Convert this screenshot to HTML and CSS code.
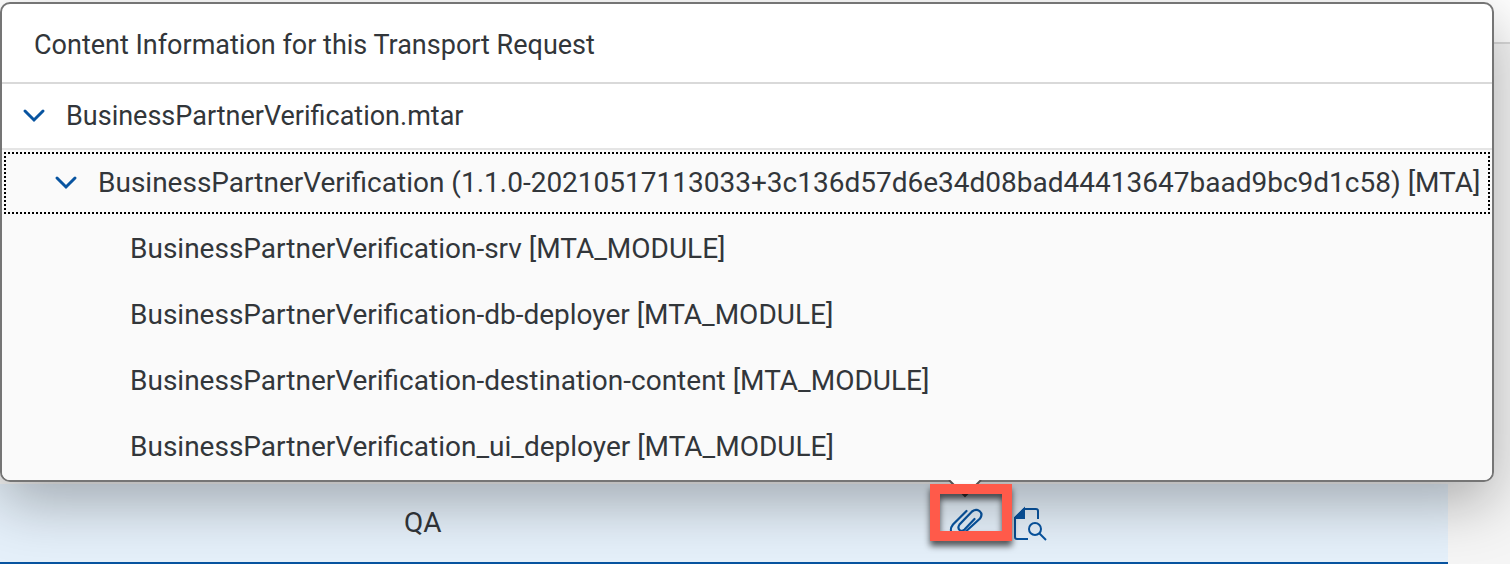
FILE: index.html
```html
<!DOCTYPE html>
<html lang="en">
<head>
<meta charset="utf-8">
<title>Transport Request Content</title>
<link rel="stylesheet" href="styles.css">
</head>
<body>
<div class="page">
  <header class="page-header"></header>
  <main class="page-body">
    <div class="queue-row">
      <span class="node-name">QA</span>
      <div class="row-actions">
        <button class="icon-button" type="button" aria-label="Show content">
          <svg width="36" height="36" viewBox="0 0 36 36" fill="none" stroke="#0854a0" stroke-width="2.200" stroke-linecap="round">
            <path d="M18.500 6 5 19.500C-1 27 7 35 14 30L32 13.500C36 8 30 2 24 6.500L11.500 19.500C8.500 24 13 28 16.500 24.500L26.500 14"/>
          </svg>
        </button>
        <button class="icon-button" type="button" aria-label="Show logs">
          <svg width="36" height="36" viewBox="0 0 36 36" fill="none" stroke="#0854a0" stroke-width="2">
            <path d="M14 34H3Q1 34 1 32V13L10 4H22Q24 4 24 6V14"/>
            <path d="M1 13 10 4V13Z" fill="#0854a0"/>
            <circle cx="21" cy="24" r="6"/>
            <path d="M25.500 28.500 32 35"/>
          </svg>
        </button>
      </div>
    </div>
  </main>
</div>
<section class="popover" role="dialog" aria-labelledby="popover-title">
  <h1 class="popover-title" id="popover-title">Content Information for this Transport Request</h1>
  <ul class="tree" role="tree">
    <li class="tree-item level-1" role="treeitem" aria-expanded="true">
      <button class="toggle" type="button" aria-label="Collapse"><svg width="24" height="16" viewBox="0 0 24 16"><path d="M3 3 12 12 21 3" fill="none" stroke="#0854a0" stroke-width="3" stroke-linecap="round"/></svg></button>
      <span>BusinessPartnerVerification.mtar</span>
    </li>
    <li class="tree-item level-2 focused" role="treeitem" aria-expanded="true">
      <button class="toggle" type="button" aria-label="Collapse"><svg width="24" height="16" viewBox="0 0 24 16"><path d="M3 3 12 12 21 3" fill="none" stroke="#0854a0" stroke-width="3" stroke-linecap="round"/></svg></button>
      <span>BusinessPartnerVerification (1.1.0-20210517113033+3c136d57d6e34d08bad44413647baad9bc9d1c58) [MTA]</span>
    </li>
    <li class="tree-item level-3" role="treeitem">BusinessPartnerVerification-srv [MTA_MODULE]</li>
    <li class="tree-item level-3" role="treeitem">BusinessPartnerVerification-db-deployer [MTA_MODULE]</li>
    <li class="tree-item level-3" role="treeitem">BusinessPartnerVerification-destination-content [MTA_MODULE]</li>
    <li class="tree-item level-3" role="treeitem">BusinessPartnerVerification_ui_deployer [MTA_MODULE]</li>
  </ul>
  <svg class="popover-arrow" width="36" height="18" viewBox="0 0 36 18"><path d="M2 0 18 16 34 0" fill="#fff" stroke="#555" stroke-width="2"/><path d="M14 13 18 17 22 13Z" fill="#444"/></svg>
</section>
<div class="highlight"></div>
</body>
</html>
```
FILE: styles.css
```css
* { box-sizing: border-box; }
body {
  margin: 0;
  background: #f5f5f5;
  color: #32363a;
  font-family: Roboto, sans-serif;
  font-size: 28px;
  line-height: 36px;
}
button {
  margin: 0;
  padding: 0;
  border: 0;
  background: none;
  cursor: pointer;
}
svg { display: block; }
.page {
  display: flex;
  flex-direction: column;
  height: 100vh;
  overflow: hidden;
}
.page-header {
  flex: 0 0 44px;
  background: #fff;
  border-bottom: 2px solid #d9d9d9;
}
.page-body {
  flex: 1;
  display: flex;
  flex-direction: column;
  justify-content: flex-end;
  padding-right: 62px;
}
.queue-row {
  display: flex;
  align-items: center;
  height: 80px;
  padding-left: 404px;
  background: #e5f0fa;
  border-bottom: 2px solid #0854a0;
}
.node-name { flex: 0 0 544px; }
.row-actions { display: flex; gap: 30px; }
.icon-button { width: 36px; height: 36px; }
.popover {
  position: absolute;
  top: 2px;
  left: 0;
  right: 16px;
  background: #fff;
  border: 2px solid #757575;
  border-radius: 10px;
  box-shadow: 0 20px 60px rgba(0, 0, 0, .3);
}
.popover-title {
  margin: 0;
  padding: 23px 32px 19px;
  border-bottom: 2px solid #d9d9d9;
  font-size: 27px;
  font-weight: 400;
}
.tree {
  margin: 0;
  padding: 0;
  list-style: none;
  white-space: nowrap;
}
.tree-item {
  display: flex;
  align-items: center;
  gap: 20px;
  height: 66px;
  background: #fafafa;
}
.tree-item:last-child { border-radius: 0 0 8px 8px; }
.level-1 {
  padding-left: 20px;
  background: #fff;
  border-bottom: 2px solid #e5e5e5;
  font-size: 27px;
}
.level-2 { padding-left: 52px; }
.level-3 { padding-left: 128px; }
.focused {
  outline: 2px dotted #000;
  outline-offset: -4px;
}
.popover-arrow {
  position: absolute;
  top: 100%;
  left: 945px;
}
.highlight {
  position: absolute;
  top: 484px;
  left: 930px;
  width: 82px;
  height: 57px;
  border: 10px solid #ff5a4a;
  filter: drop-shadow(0 5px 3px rgba(0, 0, 0, .65));
  pointer-events: none;
}
```
